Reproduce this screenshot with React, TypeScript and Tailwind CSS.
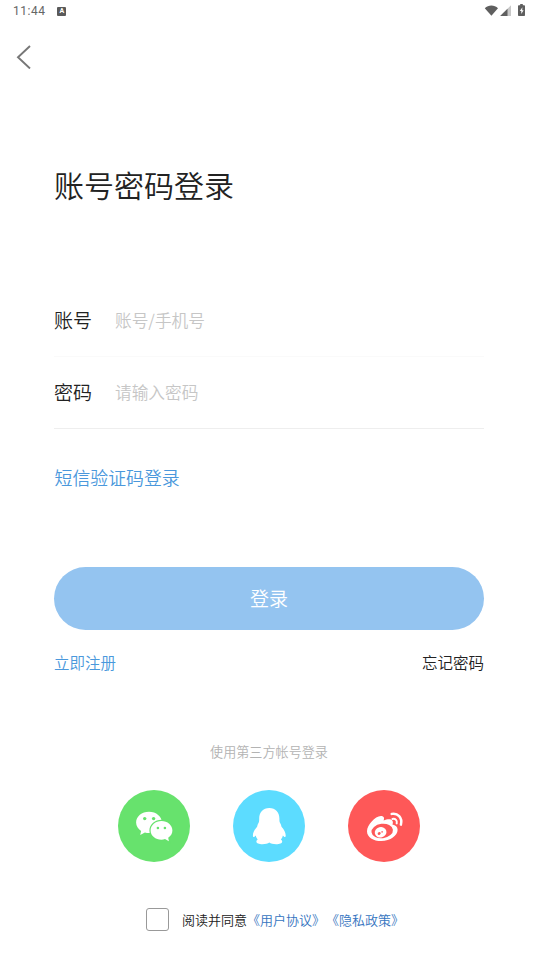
import { useState } from "react";

const StatusBar = () => (
  <div className="flex h-[22px] items-center justify-between pl-[13px] pr-3 text-[#666]">
    <div className="flex items-center gap-3">
      <span className="font-['Roboto',sans-serif] text-[12px] font-normal leading-none tracking-[0.5px]">11:44</span>
      <span className="flex h-[9px] w-[9px] items-center justify-center rounded-[1px] bg-[#5a5a5a] font-['Roboto',sans-serif] text-[7px] font-bold leading-none text-white">
        A
      </span>
    </div>
    <svg width="42" height="14" viewBox="0 0 42 14" fill="#5f5f5f">
      <path d="M.8 4.200C4.300 0.700 10.500 0.700 14 4.200L7.400 11.800Z" />
      <path d="M27 1.200V12H16.200Z" fill="#c8c8c8" />
      <path d="M23.500 4.700V12H16.200Z" />
      <path d="M36.200 0h2.600v1.200h1.400q.8 0 .8.8v9.200q0 .8-.8.8h-5.400q-.8 0-.8-.8V2q0-.8.8-.8h1.400z" />
      <path d="M38.400 3.300l-2.600 3.800h1.500v3l2.300-3.900h-1.400z" fill="#fff" />
    </svg>
  </div>
);

const WechatIcon = () => (
  <svg viewBox="0 0 72 72" className="h-full w-full">
    <path
      d="M31 21.700c-7.200 0-12.900 4.700-12.900 10.700 0 3.500 2 6.500 5 8.500l-.9 4.200 4.700-2.700c1.300.4 2.700.6 4.100.6 7.200 0 12.900-4.700 12.900-10.600S38.200 21.700 31 21.700z"
      fill="#fff"
    />
    <path
      d="M43.500 31c6 0 10.900 4.200 10.900 9.400 0 3-1.700 5.600-4.200 7.300l.7 3.500-3.900-2.100c-1.100.4-2.300.6-3.500.6-6 0-10.900-4.100-10.900-9.300S37.500 31 43.500 31z"
      fill="#fff"
      stroke="#67e26d"
      strokeWidth="2.400"
      paintOrder="stroke"
    />
    <g fill="#67e26d">
      <circle cx="26.700" cy="28.600" r="1.700" />
      <circle cx="35.600" cy="28.600" r="1.700" />
      <circle cx="39.900" cy="38" r="1.300" />
      <circle cx="46.900" cy="38" r="1.300" />
    </g>
  </svg>
);

const QQIcon = () => (
  <svg viewBox="0 0 72 72" className="h-full w-full">
    <path
      d="M36.300 18c-6.300 0-10.100 4.400-10.100 10.400 0 1.700 0 3.200-.6 4.400-.8 1.400-1.300 2.400-1.500 3.900-2.500 2.800-4.300 6-4.200 9 .1 1.300.8 1.600 1.600 1l1.200-1.200c.4 1.500 1 2.900 2 4-1 .6-1.300 1.300-1.300 2.100 0 1.900 2.700 2.700 6 2.700 3.100 0 5.500-.6 6.900-1.700 1.400 1.100 3.800 1.700 6.900 1.700 3.300 0 6-.8 6-2.700 0-.8-.4-1.500-1.300-2.100 1-1.100 1.700-2.500 2-4l1.200 1.200c.8.6 1.600.3 1.600-1 .1-3-1.700-6.200-4.200-9-.2-1.500-.7-2.500-1.500-3.900-.6-1.200-.6-2.700-.6-4.400 0-6-3.800-10.400-10.100-10.400z"
      fill="#fff"
    />
  </svg>
);

const WeiboIcon = () => (
  <svg viewBox="0 0 72 72" className="h-full w-full">
    <path
      d="M34.500 26.300c2 .7 1.700 2.700 1.100 4.300 3.200-1.300 6.900-2 8.600-.2 1 1.100.8 2.600.2 4.200 3.200.7 5.200 2.500 5.200 5.200 0 5.800-7.200 11.200-16.300 11.200-8 0-14.300-3.700-14.300-9.800 0-6.500 9.800-17.100 15.500-14.900z"
      fill="#fff"
    />
    <ellipse cx="34.200" cy="41" rx="10.800" ry="7.200" transform="rotate(-7 34.200 41)" fill="#fe5858" />
    <ellipse cx="32.600" cy="42.300" rx="5.900" ry="5.200" transform="rotate(-15 32.600 42.300)" fill="#fff" />
    <ellipse cx="31.200" cy="43.500" rx="1.600" ry="1.300" transform="rotate(-25 31.200 43.500)" fill="#fe5858" />
    <circle cx="34.100" cy="41.900" r=".8" fill="#fe5858" />
    <g fill="none" stroke="#fff" strokeLinecap="round">
      <path d="M43.700 23.900c5.800-1.300 11 3.900 9.200 10.700" strokeWidth="2.500" />
      <path d="M44.500 28.900c2.900-.5 5 1.600 4.200 4.500" strokeWidth="2" />
    </g>
  </svg>
);

const providers = [
  { name: "wechat", color: "bg-[#67e26d]", Icon: WechatIcon },
  { name: "qq", color: "bg-[#5cdcff]", Icon: QQIcon },
  { name: "weibo", color: "bg-[#fe5858]", Icon: WeiboIcon },
];

const Field = ({
  label,
  placeholder,
  type,
  border,
}: {
  label: string;
  placeholder: string;
  type: string;
  border: string;
}) => (
  <label className={`flex items-center border-b ${border}`}>
    <span className="w-[61px] shrink-0 text-[19px] text-[#222]">{label}</span>
    <input
      type={type}
      placeholder={placeholder}
      className="min-w-0 flex-1 bg-transparent pt-px text-[16.700px] outline-none placeholder:text-[#c6c6c6]"
    />
  </label>
);

export default function App() {
  const [agreed, setAgreed] = useState(false);

  return (
    <div className="flex h-[958px] w-full flex-col bg-white font-['Noto_Sans_CJK_SC',sans-serif] font-[350] text-[#222]">
      <StatusBar />

      <header className="flex h-[70px] items-center pl-4">
        <button type="button">
          <svg width="16" height="24" viewBox="0 0 16 24" fill="none" stroke="#777" strokeWidth="1.900">
            <path d="M14 1L2 12.300L14 23.500" />
          </svg>
        </button>
      </header>

      <main className="flex flex-1 flex-col px-[54px]">
        <h1 className="mt-[70px] text-[30px] leading-[44px]">账号密码登录</h1>

        <div className="mt-[78px] grid grid-rows-[73px_72px]">
          <Field label="账号" placeholder="账号/手机号" type="text" border="border-[#fafafa]" />
          <Field label="密码" placeholder="请输入密码" type="password" border="border-[#eee]" />
        </div>

        <a className="mt-[35px] pl-[0.5px] text-[17.900px] leading-[26px] text-[#4a98dc]">短信验证码登录</a>

        <button
          type="button"
          className="mt-[77px] h-[63px] w-full rounded-full bg-[#94c4f0] pb-px text-[19px] text-white"
        >
          登录
        </button>

        <div className="mt-5 flex justify-between text-[15.500px] leading-6">
          <a className="text-[#4a98dc]">立即注册</a>
          <a>忘记密码</a>
        </div>

        <p className="mt-[68px] text-center text-[13.100px] leading-5 text-[#b3b3b3]">使用第三方帐号登录</p>

        <div className="mt-[28px] flex justify-center gap-[43px]">
          {providers.map(({ name, color, Icon }) => (
            <button key={name} type="button" className={`h-[72px] w-[72px] rounded-full ${color}`}>
              <Icon />
            </button>
          ))}
        </div>

        <div className="mt-[46px] flex items-center pl-[92px] text-[13px] leading-[23px] whitespace-nowrap">
          <input
            type="checkbox"
            checked={agreed}
            onChange={() => setAgreed(!agreed)}
            className="mr-[13px] h-[23px] w-[23px] appearance-none rounded-[3px] border border-[#999] checked:bg-[#94c4f0]"
          />
          <span>阅读并同意</span>
          <a className="text-[#3574c0]">《用户协议》</a>
          <a className="ml-px text-[#3574c0]">《隐私政策》</a>
        </div>
      </main>
    </div>
  );
}
